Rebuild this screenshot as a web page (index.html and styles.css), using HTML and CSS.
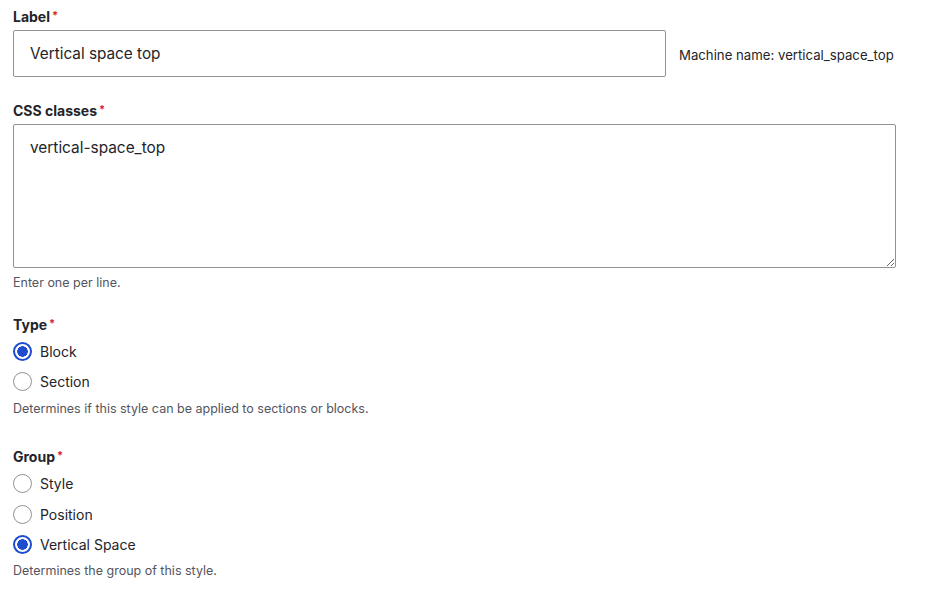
FILE: index.html
```html
<!DOCTYPE html>
<html lang="en">
<head>
<meta charset="utf-8">
<title>Style form</title>
<link rel="stylesheet" href="styles.css">
</head>
<body>
<form class="form">
  <div class="field field-label">
    <label class="form-label" for="label">Label<span class="req">*</span></label>
    <div class="input-row">
      <input id="label" class="text-input" type="text" value="Vertical space top">
      <span class="machine-name">Machine name: vertical_space_top</span>
    </div>
  </div>

  <div class="field field-css">
    <label class="form-label" for="css">CSS classes<span class="req">*</span></label>
    <textarea id="css" class="textarea">vertical-space_top</textarea>
    <div class="description desc-css">Enter one per line.</div>
  </div>

  <fieldset class="radios radios-type">
    <legend class="form-label">Type<span class="req">*</span></legend>
    <label class="radio-row"><input type="radio" name="type" class="radio" checked><span>Block</span></label>
    <label class="radio-row"><input type="radio" name="type" class="radio"><span>Section</span></label>
    <div class="description">Determines if this style can be applied to sections or blocks.</div>
  </fieldset>

  <fieldset class="radios radios-group">
    <legend class="form-label">Group<span class="req">*</span></legend>
    <label class="radio-row"><input type="radio" name="group" class="radio"><span>Style</span></label>
    <label class="radio-row"><input type="radio" name="group" class="radio"><span>Position</span></label>
    <label class="radio-row"><input type="radio" name="group" class="radio" checked><span>Vertical Space</span></label>
    <div class="description">Determines the group of this style.</div>
  </fieldset>
</form>
</body>
</html>
```

FILE: styles.css
```css
* { box-sizing: border-box; }
html, body {
  margin: 0;
  background: #ffffff;
}
body {
  font-family: Inter, "Liberation Sans", Arial, sans-serif;
  color: #232429;
  padding: 8px 13px 0 13px;
}
.form { display: flex; flex-direction: column; }

.form-label {
  display: block;
  font-weight: 700;
  font-size: 14px;
  line-height: 18px;
  color: #232429;
  padding: 0;
}
.req {
  color: #d72222;
  font-size: 11px;
  margin-left: 2px;
  vertical-align: top;
  line-height: 14px;
}

.field-label .form-label { margin-bottom: 4px; }
.input-row {
  display: flex;
  align-items: center;
}
.text-input {
  width: 653px;
  height: 47px;
  border: 1px solid #919297;
  border-radius: 2px;
  padding: 0 16px;
  font-family: inherit;
  font-size: 15.3px;
  color: #232429;
  background: #fff;
  outline: none;
  margin: 0;
}
.machine-name {
  font-size: 13.2px;
  color: #232429;
  margin-left: 13px;
  padding-top: 2px;
}

.field-css { margin-top: 25px; }
.field-css .form-label { margin-bottom: 4px; }
.textarea {
  display: block;
  width: 883px;
  height: 144px;
  border: 1px solid #919297;
  border-radius: 2px;
  padding: 13px 16px;
  font-family: inherit;
  font-size: 15.4px;
  line-height: 20px;
  color: #232429;
  background: #fff;
  resize: vertical;
  outline: none;
  margin: 0;
}
.description {
  font-size: 12.5px;
  line-height: 16px;
  color: #545560;
}
.desc-css { margin-top: 7px; }

.radios {
  border: 0;
  margin: 0;
  padding: 0;
  min-width: 0;
}
.radios legend { float: left; width: 100%; }
.radios-type legend { margin-bottom: 2px; }
.radios-group legend { margin-bottom: 3px; }
.radios-type { margin-top: 25px; }
.radios-group { margin-top: 31px; }
.radios .description { clear: both; }
.radios-type .description { margin-top: 3.5px; }
.radios-group .description { margin-top: 2.5px; }

.radio-row {
  clear: both;
  display: flex;
  align-items: center;
  height: 30.5px;
  font-size: 14px;
  color: #232429;
}
.radio {
  appearance: none;
  -webkit-appearance: none;
  width: 19px;
  height: 19px;
  margin: 0 8px 0 0;
  border: 1px solid #919297;
  border-radius: 50%;
  background: #fff;
  flex: none;
}
.radio:checked {
  border: 2.5px solid #1e4ccf;
  background: radial-gradient(circle, #1e4ccf 0 5px, #fff 5.5px);
}
```
